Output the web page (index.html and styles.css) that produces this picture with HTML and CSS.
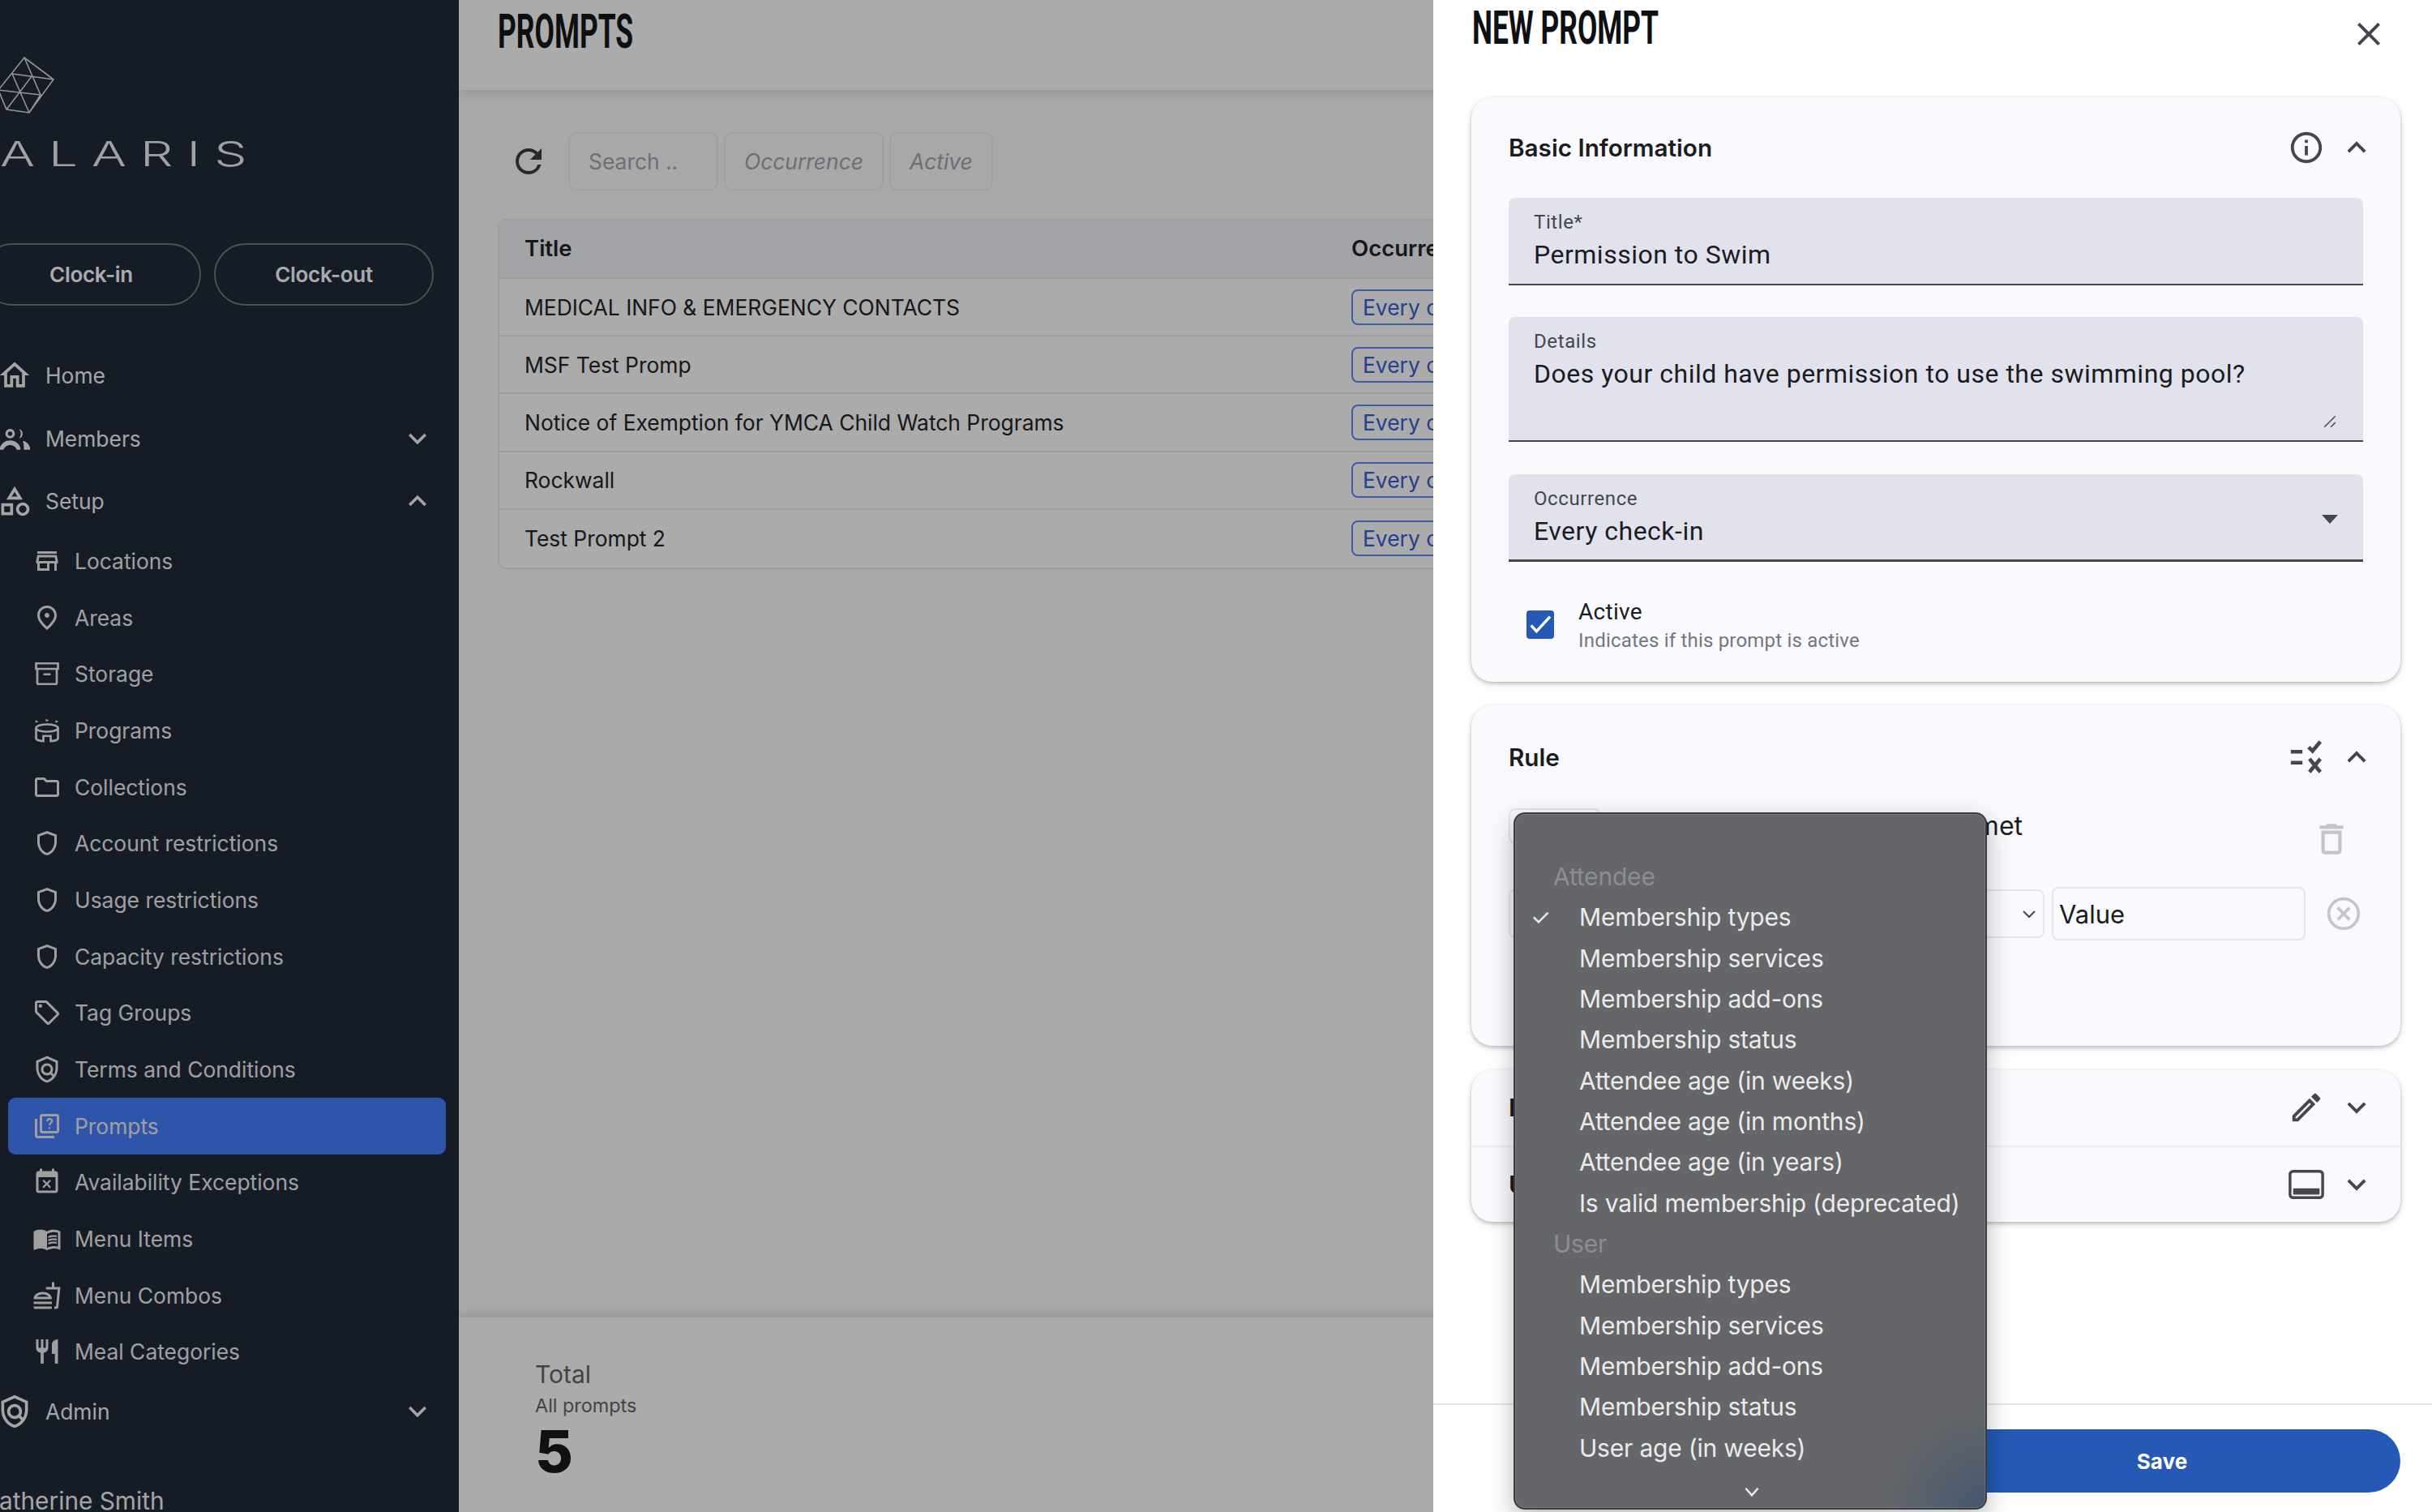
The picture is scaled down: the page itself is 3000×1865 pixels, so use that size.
FILE: index.html
```html
<!DOCTYPE html>
<html lang="en">
<head>
<meta charset="utf-8">
<title>Prompts</title>
<link rel="stylesheet" href="styles.css">
</head>
<body>
<div class="app">
  <aside class="sidebar">
    <div class="side-inner">
      <div class="logo">
        <svg class="logo-mark" viewBox="0 0 70 68" fill="none" stroke="currentColor" stroke-width="1.6"><path d="M30 0L66 27 36 68 8 64-2 40 30 0ZM15 20l51 7M-2 40l52 6M30 0l20 46-14 22M15 20l21 48M40 22L8 64"/></svg>
        <div class="logo-word"><span>ALARIS</span></div>
      </div>
      <div class="clock">
        <button class="clock-btn">Clock-in</button>
        <button class="clock-btn">Clock-out</button>
      </div>
      <nav>
        <a class="top"><svg class="i44" viewBox="0 0 24 24"><path d="M12 5.690l5 4.500V18h-2v-6H9v6H7v-7.810l5-4.500M12 3L2 12h3v8h6v-6h2v6h6v-8h3L12 3z"/></svg><span class="lbl">Home</span></a>
        <a class="top"><svg class="i44" viewBox="0 0 24 24"><path fill-rule="evenodd" d="M9 5.500a3.200 3.200 0 1 1 0 6.400 3.200 3.200 0 0 1 0-6.400zm0 1.700a1.500 1.500 0 1 0 0 3 1.500 1.500 0 0 0 0-3zM2 19.500c0-3.800 3.500-6.300 7-6.300s7 2.500 7 6.300h-2.500c-.6-2-2.500-3.200-4.500-3.200s-3.900 1.200-4.500 3.200zM15 5.600a3.200 3.200 0 0 1 0 6.200 4.600 4.600 0 0 0 0-6.200zM17.500 13.500c2.700.6 5 2.500 5 6h-4.200c0-2.500-.2-4.300-.8-6z"/></svg><span class="lbl">Members</span><svg class="i44 chev" viewBox="0 0 24 24"><path d="M7.410 8.590L12 13.170l4.590-4.580L18 10l-6 6-6-6 1.410-1.410z"/></svg></a>
        <a class="top"><svg class="i44" viewBox="0 0 24 24"><path d="M12 2l-5.500 9h11L12 2zm0 3.840L13.930 9h-3.870L12 5.840zM17.500 13c-2.490 0-4.500 2.010-4.500 4.500s2.010 4.500 4.500 4.500 4.500-2.010 4.500-4.500-2.010-4.500-4.500-4.500zm0 7c-1.380 0-2.500-1.120-2.500-2.500s1.120-2.500 2.500-2.500 2.500 1.120 2.500 2.500-1.120 2.500-2.500 2.500zM3 21.500h8v-8H3v8zm2-6h4v4H5v-4z"/></svg><span class="lbl">Setup</span><svg class="i44 chev" viewBox="0 0 24 24"><path d="M7.410 15.410L12 10.830l4.590 4.580L18 14l-6-6-6 6z"/></svg></a>
        <a class="sub"><svg class="i36" viewBox="0 0 24 24"><path d="M20 4H4v2h16V4zm1 10v-2l-1-5H4l-1 5v2h1v6h10v-6h4v6h2v-6h1zm-9 4H6v-4h6v4zm-6.960-6l.6-3h12.720l.6 3H5.040z"/></svg>Locations</a>
        <a class="sub"><svg class="i36" viewBox="0 0 24 24"><path d="M12 12c-1.100 0-2-.9-2-2s.9-2 2-2 2 .9 2 2-.9 2-2 2zm6-1.800C18 6.570 15.350 4 12 4s-6 2.570-6 6.200c0 2.340 1.950 5.440 6 9.140 4.050-3.700 6-6.800 6-9.140zM12 2c4.200 0 8 3.220 8 8.200 0 3.320-2.670 7.250-8 11.800-5.330-4.550-8-8.480-8-11.800C4 5.220 7.800 2 12 2z"/></svg>Areas</a>
        <a class="sub"><svg class="i36 line" viewBox="0 0 24 24"><path d="M3 3.500h18v4.500H3zM4 8v11.500c0 .5.4 1 1 1h14c.6 0 1-.5 1-1V8M9 12.500h6"/></svg>Storage</a>
        <a class="sub"><svg class="i36 line" viewBox="0 0 24 24"><ellipse cx="12" cy="10" rx="9" ry="3"/><path d="M3 10v8.500c0 1.300 3 2.200 6 2.200V16.500h6v4.200c3 0 6-.9 6-2.200V10"/><path class="flag" d="M2.500 3.500l2.500 1.200-2.500 1.200zM11 2.500l2.500 1.200L11 4.900zM19 3.500l2.500 1.200L19 5.900z"/></svg>Programs</a>
        <a class="sub"><svg class="i36" viewBox="0 0 24 24"><path d="M9.170 6l2 2H20v10H4V6h5.170M10 4H4c-1.100 0-1.990.9-1.990 2L2 18c0 1.100.9 2 2 2h16c1.100 0 2-.9 2-2V8c0-1.100-.9-2-2-2h-8l-2-2z"/></svg>Collections</a>
        <a class="sub"><svg class="i36" viewBox="0 0 24 24"><path d="M12 2L4 5v6.090c0 5.050 3.410 9.760 8 10.910 4.590-1.150 8-5.860 8-10.910V5l-8-3zm6 9.090c0 4-2.550 7.700-6 8.830-3.450-1.130-6-4.820-6-8.830v-4.700l6-2.250 6 2.250v4.700z"/></svg>Account restrictions</a>
        <a class="sub"><svg class="i36" viewBox="0 0 24 24"><path d="M12 2L4 5v6.090c0 5.050 3.410 9.760 8 10.910 4.590-1.150 8-5.860 8-10.910V5l-8-3zm6 9.090c0 4-2.550 7.700-6 8.830-3.450-1.130-6-4.820-6-8.830v-4.700l6-2.250 6 2.250v4.700z"/></svg>Usage restrictions</a>
        <a class="sub"><svg class="i36" viewBox="0 0 24 24"><path d="M12 2L4 5v6.090c0 5.050 3.410 9.760 8 10.910 4.590-1.150 8-5.860 8-10.910V5l-8-3zm6 9.090c0 4-2.550 7.700-6 8.830-3.450-1.130-6-4.820-6-8.830v-4.700l6-2.250 6 2.250v4.700z"/></svg>Capacity restrictions</a>
        <a class="sub"><svg class="i36" viewBox="0 0 24 24"><path d="M21.410 11.580l-9-9C12.050 2.220 11.550 2 11 2H4c-1.100 0-2 .9-2 2v7c0 .55.22 1.050.59 1.420l9 9c.36.36.86.58 1.410.58s1.050-.22 1.410-.59l7-7c.37-.36.59-.86.59-1.410s-.23-1.060-.59-1.420zM13 20.010L4 11V4h7v-.01l9 9-7 7.020z"/><circle cx="6.500" cy="6.500" r="1.500"/></svg>Tag Groups</a>
        <a class="sub"><svg class="i36" viewBox="0 0 24 24"><path d="M12 1L3 5v6c0 5.550 3.840 10.740 9 12 5.160-1.260 9-6.450 9-12V5l-9-4zm7 10c0 1.850-.51 3.650-1.380 5.210l-1.450-1.450c1.290-1.940 1.070-4.580-.64-6.290-1.950-1.950-5.120-1.950-7.070 0-1.950 1.950-1.950 5.120 0 7.070 1.710 1.710 4.350 1.920 6.290.64l1.720 1.720c-1.190 1.420-2.730 2.510-4.470 3.040C7.980 19.690 5 15.520 5 11V6.300l7-3.110 7 3.110V11zm-7 4c-1.660 0-3-1.340-3-3s1.340-3 3-3 3 1.340 3 3-1.340 3-3 3z"/></svg>Terms and Conditions</a>
        <a class="sub active"><svg class="i36" viewBox="0 0 24 24"><path d="M4 6H2v14c0 1.100.9 2 2 2h14v-2H4V6z"/><path d="M20 2H8c-1.100 0-2 .9-2 2v12c0 1.100.9 2 2 2h12c1.100 0 2-.9 2-2V4c0-1.100-.9-2-2-2zm0 14H8V4h12v12z"/><path class="q" d="M12 8c.2-1.200 1-1.900 2.100-1.900 1.200 0 2 .8 2 1.800 0 1.700-2.100 1.700-2.100 3.600M14 13v1.300"/></svg>Prompts</a>
        <a class="sub"><svg class="i36" viewBox="0 0 24 24"><path d="M9.310 17l2.440-2.440L14.190 17l1.060-1.060-2.440-2.440 2.440-2.440L14.190 10l-2.440 2.440L9.310 10l-1.060 1.060 2.440 2.440-2.440 2.440L9.310 17zM19 3h-1V1h-2v2H8V1H6v2H5c-1.110 0-1.990.9-1.990 2L3 19c0 1.100.89 2 2 2h14c1.100 0 2-.9 2-2V5c0-1.100-.9-2-2-2zm0 16H5V8h14v11z"/></svg>Availability Exceptions</a>
        <a class="sub"><svg class="i36" viewBox="0 0 24 24"><path d="M21 5c-1.110-.35-2.330-.5-3.500-.5-1.950 0-4.050.4-5.500 1.500-1.450-1.100-3.550-1.500-5.500-1.500S2.450 4.900 1 6v14.650c0 .25.25.5.5.5.1 0 .15-.05.25-.05C3.100 20.450 5.050 20 6.500 20c1.950 0 4.050.4 5.500 1.500 1.350-.85 3.800-1.500 5.500-1.500 1.650 0 3.350.3 4.750 1.050.1.05.15.05.25.05.25 0 .5-.25.5-.5V6c-.6-.45-1.250-.75-2-1zm0 13.500c-1.100-.35-2.300-.5-3.500-.5-1.700 0-4.150.65-5.500 1.500V8c1.350-.85 3.800-1.500 5.500-1.500 1.200 0 2.400.15 3.500.5v11.500z"/><path d="M17.500 10.500c.88 0 1.730.09 2.500.26V9.240c-.79-.15-1.640-.24-2.500-.24-1.700 0-3.240.29-4.500.83v1.660c1.130-.64 2.700-.99 4.500-.99zM13 12.490v1.660c1.130-.64 2.700-.99 4.500-.99.880 0 1.730.09 2.500.26V11.900c-.79-.15-1.640-.24-2.500-.24-1.700 0-3.240.3-4.500.83zM17.500 14.330c-1.700 0-3.240.29-4.500.83v1.660c1.130-.64 2.700-.99 4.500-.99.880 0 1.730.09 2.500.26v-1.520c-.79-.16-1.640-.24-2.500-.24z"/></svg>Menu Items</a>
        <a class="sub"><svg class="i36" viewBox="0 0 24 24"><path d="M1 21.980c0 .56.45 1.010 1.010 1.010H15c.56 0 1.010-.45 1.010-1.010V21H1v.98zM8.500 8.990C4.750 8.990 1 11 1 15h15c0-4-3.750-6.010-7.500-6.010zM3.620 13c1.110-1.550 3.470-2.010 4.880-2.010s3.770.46 4.880 2.010H3.620zM1 17h15v2H1zM18 5V1h-2v4h-5l.23 2h9.560l-1.400 14H18v2h1.720c.84 0 1.530-.65 1.630-1.470L23 5h-5z"/></svg>Menu Combos</a>
        <a class="sub"><svg class="i36" viewBox="0 0 24 24"><path d="M11 9H9V2H7v7H5V2H3v7c0 2.120 1.660 3.840 3.750 3.970V22h2.500v-9.030C11.340 12.840 13 11.120 13 9V2h-2v7zm5-3v8h2.500v8H21V2c-2.760 0-5 2.240-5 4z"/></svg>Meal Categories</a>
        <a class="top"><svg class="i44" viewBox="0 0 24 24"><path d="M12 1L3 5v6c0 5.550 3.840 10.740 9 12 5.160-1.260 9-6.450 9-12V5l-9-4zm7 10c0 1.850-.51 3.650-1.380 5.210l-1.450-1.450c1.290-1.940 1.070-4.580-.64-6.290-1.950-1.950-5.120-1.950-7.070 0-1.950 1.950-1.950 5.120 0 7.070 1.710 1.710 4.350 1.920 6.290.64l1.720 1.720c-1.190 1.420-2.730 2.510-4.470 3.040C7.980 19.690 5 15.520 5 11V6.300l7-3.110 7 3.110V11zm-7 4c-1.660 0-3-1.340-3-3s1.340-3 3-3 3 1.340 3 3-1.340 3-3 3z"/></svg><span class="lbl">Admin</span><svg class="i44 chev" viewBox="0 0 24 24"><path d="M7.410 8.590L12 13.170l4.590-4.580L18 10l-6 6-6-6 1.410-1.410z"/></svg></a>
      </nav>
      <div class="user">Katherine Smith</div>
    </div>
  </aside>

  <main class="main">
    <header class="page-head"><h1 class="cond page-title">PROMPTS</h1></header>
    <div class="toolbar">
      <svg class="refresh" viewBox="0 0 24 24"><path d="M17.650 6.350A7.958 7.958 0 0 0 12 4c-4.420 0-7.990 3.580-7.990 8s3.570 8 7.990 8c3.730 0 6.840-2.550 7.730-6h-2.080A5.990 5.990 0 0 1 12 18c-3.310 0-6-2.690-6-6s2.690-6 6-6c1.660 0 3.140.69 4.220 1.780L13 11h7V4l-2.350 2.350z"/></svg>
      <div class="tb-box tb-search">Search ..</div>
      <div class="tb-box tb-em">Occurrence</div>
      <div class="tb-box tb-em">Active</div>
    </div>
    <div class="table-wrap">
      <div class="t-row t-head"><div class="t-title">Title</div><div>Occurrence</div></div>
      <div class="t-row"><div class="t-title">MEDICAL INFO &amp; EMERGENCY CONTACTS</div><div class="chip">Every check-in</div></div>
      <div class="t-row"><div class="t-title">MSF Test Promp</div><div class="chip">Every check-in</div></div>
      <div class="t-row"><div class="t-title">Notice of Exemption for YMCA Child Watch Programs</div><div class="chip">Every check-in</div></div>
      <div class="t-row"><div class="t-title">Rockwall</div><div class="chip">Every check-in</div></div>
      <div class="t-row"><div class="t-title">Test Prompt 2</div><div class="chip">Every check-in</div></div>
    </div>
    <footer class="stats">
      <div class="st-total">Total</div>
      <div class="st-sub">All prompts</div>
      <div class="st-num">5</div>
    </footer>
  </main>
</div>

<div class="scrim"></div>

<section class="drawer">
  <div class="dr-head">
    <h2 class="cond dr-title">NEW PROMPT</h2>
    <svg class="dr-close" viewBox="0 0 24 24"><path d="M19 6.410L17.590 5 12 10.590 6.410 5 5 6.410 10.590 12 5 17.590 6.410 19 12 13.410 17.590 19 19 17.590 13.410 12z"/></svg>
  </div>

  <div class="card card-basic">
    <div class="card-head">
      <span class="card-title">Basic Information</span>
      <svg class="c-ic" viewBox="0 0 24 24"><path d="M11 7h2v2h-2zm0 4h2v6h-2zm1-9C6.480 2 2 6.480 2 12s4.480 10 10 10 10-4.480 10-10S17.520 2 12 2zm0 18c-4.410 0-8-3.590-8-8s3.590-8 8-8 8 3.590 8 8-3.590 8-8 8z"/></svg>
      <svg class="c-ic c-chev" viewBox="0 0 24 24"><path d="M7.410 15.410L12 10.830l4.590 4.580L18 14l-6-6-6 6z"/></svg>
    </div>
    <div class="field f-title"><div class="f-label">Title*</div><div class="f-value">Permission to Swim</div></div>
    <div class="field f-details"><div class="f-label">Details</div><div class="f-value">Does your child have permission to use the swimming pool?</div>
      <svg class="resizer" viewBox="0 0 16 16"><path d="M14 2L2 14M14 9l-5 5"/></svg></div>
    <div class="field f-occ"><div class="f-label">Occurrence</div><div class="f-value">Every check-in</div><span class="f-arrow"></span></div>
    <div class="check-row">
      <span class="checkbox"><svg viewBox="0 0 24 24"><path d="M3.500 13l5 5.500L21 5"/></svg></span>
      <div><div class="ck-main">Active</div><div class="ck-sub">Indicates if this prompt is active</div></div>
    </div>
  </div>

  <div class="card card-rule">
    <div class="card-head head-rule">
      <span class="card-title">Rule</span>
      <svg class="c-ic rule-ic" viewBox="0 0 24 24"><path d="M2 8.500H9.500M2 15.500H9.500M13.500 5.500l2.500 2.500 5-6M14 13l7 8.500M21 13l-7 8.500"/></svg>
      <svg class="c-ic c-chev" viewBox="0 0 24 24"><path d="M7.410 15.410L12 10.830l4.590 4.580L18 14l-6-6-6 6z"/></svg>
    </div>
    <div class="rule-row1">
      <div class="mini-field"></div>
      <div class="rule-text">met</div>
      <svg class="trash" viewBox="0 0 24 24"><path d="M16 9v10H8V9h8m-1.500-6h-5l-1 1H5v2h14V4h-3.500l-1-1zM18 7H6v12c0 1.100.9 2 2 2h8c1.100 0 2-.9 2-2V7z"/></svg>
    </div>
    <div class="rule-row2">
      <div class="rule-select"><svg viewBox="0 0 24 24"><path d="M5 9l7 7 7-7"/></svg></div>
      <div class="rule-value">Value</div>
      <svg class="x-circle" viewBox="0 0 24 24"><circle cx="12" cy="12" r="10"/><path d="M8 8l8 8M16 8l-8 8"/></svg>
    </div>
  </div>

  <div class="card card-more">
    <div class="more-row">
      <span class="card-title">E</span>
      <svg class="c-ic" viewBox="0 0 24 24"><path d="M3 17.250V21h3.750L17.810 9.940l-3.750-3.750L3 17.250zM5.920 19H5v-.92l9.060-9.060.92.92L5.920 19zM20.710 5.630l-2.340-2.340c-.2-.2-.45-.29-.71-.29s-.51.1-.7.29l-1.830 1.830 3.750 3.750 1.830-1.830c.39-.39.39-1.020 0-1.410z"/></svg>
      <svg class="c-ic c-chev" viewBox="0 0 24 24"><path d="M7.410 8.590L12 13.170l4.590-4.580L18 10l-6 6-6-6 1.410-1.410z"/></svg>
    </div>
    <div class="more-row">
      <span class="card-title">U</span>
      <svg class="c-ic panel-ic" viewBox="0 0 24 24"><rect class="pr" x="1.500" y="3.500" width="21" height="17" rx="2"/><rect x="3.500" y="14.500" width="17" height="4"/></svg>
      <svg class="c-ic c-chev" viewBox="0 0 24 24"><path d="M7.410 8.590L12 13.170l4.590-4.580L18 10l-6 6-6-6 1.410-1.410z"/></svg>
    </div>
  </div>

  <div class="dr-foot"><button class="save">Save</button></div>
</section>

<div class="popup">
  <div class="pop-group">Attendee</div>
  <div class="pop-item checked">Membership types</div>
  <div class="pop-item">Membership services</div>
  <div class="pop-item">Membership add-ons</div>
  <div class="pop-item">Membership status</div>
  <div class="pop-item">Attendee age (in weeks)</div>
  <div class="pop-item">Attendee age (in months)</div>
  <div class="pop-item">Attendee age (in years)</div>
  <div class="pop-item">Is valid membership (deprecated)</div>
  <div class="pop-group">User</div>
  <div class="pop-item">Membership types</div>
  <div class="pop-item">Membership services</div>
  <div class="pop-item">Membership add-ons</div>
  <div class="pop-item">Membership status</div>
  <div class="pop-item">User age (in weeks)</div>
  <svg class="pop-more" viewBox="0 0 24 24"><path d="M5 8l7 8 7-8"/></svg>
</div>
</body>
</html>
```

FILE: styles.css
```css
* { box-sizing: border-box; }
html, body { margin: 0; height: 100%; overflow: hidden; }
body { font-family: Inter, "Liberation Sans", sans-serif; color: #22252a; background: #fff; position: relative; width: 3000px; height: 1865px; }
svg { fill: currentColor; flex: none; display: block; }

.app { display: flex; height: 1865px; }
.sidebar { width: 566px; flex: none; background: #202a3a; color: #f6f6f6; overflow: hidden; }
.side-inner { margin-left: -23px; width: 589px; }

.logo { height: 300px; padding: 71px 0 0 23px; }
.logo-mark { width: 70px; height: 68px; overflow: visible; stroke: #dcdcdc; fill: none; }
.logo-word { margin-top: 35px; height: 32px; line-height: 32px; font-weight: 300; font-size: 42px; letter-spacing: 11.2px; color: #f0f0f0; }
.logo-word span { display: inline-block; transform: scaleX(1.52); transform-origin: 0 50%; }

.clock { display: flex; gap: 16px; height: 77px; margin-bottom: 47.5px; }
.clock-btn { width: 271px; height: 77px; border-radius: 39px; border: 2px solid #72767d; background: transparent; color: #fff; font: 600 26px Inter, sans-serif; letter-spacing: -.3px; padding: 0; }

.top { display: flex; align-items: center; height: 77.500px; padding: 0 29px 0 19px; font-size: 26.400px; }
.top .lbl { margin-left: 16px; flex: 1; }
.i44 { width: 44px; height: 44px; }
.sub { display: flex; align-items: center; gap: 16px; height: 69.700px; margin-left: 33px; width: 540px; padding-left: 30px; font-size: 26.400px; color: #eeeeee; border-radius: 9px; }
.i36 { width: 36px; height: 36px; }
.i36.line { fill: none; stroke: currentColor; stroke-width: 1.800; }
.i36.line .flag { fill: currentColor; stroke: none; }
.q { fill: none; stroke: currentColor; stroke-width: 1.400; }
.sub.active { background: #467fff; }
.user { margin-top: 36px; padding-left: 2px; font-size: 29.800px; line-height: 70px; white-space: nowrap; }

.main { flex: 1; min-width: 0; background: #fbfbfb; display: flex; flex-direction: column; overflow: hidden; }
.page-head { height: 111px; flex: none; background: #fff; box-shadow: 0 3px 14px rgba(0,0,0,.14); padding-left: 48px; position: relative; }
.cond { margin: 0; font-family: Roboto, sans-serif; font-weight: 700; color: #111; display: inline-block; transform-origin: 0 50%; white-space: nowrap; }
.page-title { font-size: 59px; line-height: 78px; transform: scaleX(.6); color: #15171a; }

.toolbar { display: flex; align-items: center; padding: 51px 0 0 62px; flex: none; gap: 7px; height: 124px; }
.refresh { width: 48px; height: 48px; margin-right: 18px; fill: #3a3c40; }
.tb-box { height: 72px; border: 2px solid #eeeeee; border-radius: 10px; display: flex; align-items: center; padding: 0 23px; font-size: 26.400px; color: #a2a6ae; }
.tb-search { width: 185px; }
.tb-em { font-style: italic; }

.table-wrap { margin: 35px 0 0 48px; width: 1400px; border: 2px solid #ebebeb; border-right: 0; border-radius: 10px 0 0 10px; background: #fff; flex: none; }
.t-row { display: flex; align-items: center; height: 71.200px; border-bottom: 2px solid #ebebeb; font-size: 26.400px; color: #22252a; white-space: nowrap; }
.t-row:last-child { border-bottom: 0; }
.t-head { height: 72px; background: #f2f5f9; font-weight: 600; font-size: 27.500px; padding-bottom: 2px; }
.t-title { width: 1051px; padding-left: 31px; flex: none; }
.chip { height: 44px; border: 2px solid #578cfa; border-radius: 8px; display: flex; align-items: center; padding: 0 12px; color: #3760d6; }

.stats { margin-top: auto; height: 240px; flex: none; background: #fff; box-shadow: 0 -2px 12px rgba(0,0,0,.14); padding: 48px 0 0 94px; position: relative; }
.st-total { font-size: 30px; line-height: 44px; color: #666; }
.st-sub { font-size: 23.400px; line-height: 34px; color: #666; }
.st-num { font-size: 72px; font-weight: 800; line-height: 78px; color: #191a1d; }

.scrim { position: absolute; inset: 0; background: rgba(0,0,0,.33); }

.drawer { position: absolute; top: 0; right: 0; bottom: 0; width: 1232px; background: #fff; display: flex; flex-direction: column; font-family: Roboto, sans-serif; }
.dr-head { height: 120px; flex: none; padding: 0 54px 0 48px; display: flex; justify-content: space-between; }
.dr-title { font-size: 57px; line-height: 70px; transform: scaleX(.62); color: #0e0f12; }
.dr-close { width: 48px; height: 48px; margin-top: 18px; fill: #44474e; }

.card { margin: 0 39px 0 47px; flex: none; background: #f9f9fe; border-radius: 26px; box-shadow: 0 2px 5px rgba(0,0,0,.25), 0 4px 12px rgba(0,0,0,.06); padding: 0 46px; }
.card-basic { height: 721px; }
.card-rule { height: 420px; margin-top: 29px; }
.card-more { height: 187px; margin-top: 30px; padding: 0; display: flex; flex-direction: column; }

.card-head { height: 124px; display: flex; align-items: center; margin-right: -23px; }
.head-rule { height: 127px; }
.card-title { font-family: Inter, sans-serif; font-weight: 600; font-size: 29.700px; color: #191c20; flex: 1; }
.c-ic { width: 46px; height: 46px; fill: #44474e; }
.c-chev { margin-left: 16px; margin-right: 8px; }
.rule-ic { fill: none; stroke: #44474e; stroke-width: 2.400; }

.field { position: relative; background: #e1e2ec; border-radius: 8px 8px 0 0; border-bottom: 2px solid #44474e; padding: 14px 31px 0; }
.f-title { height: 108px; }
.f-details { height: 154px; margin-top: 39px; }
.f-occ { height: 108px; margin-top: 40px; border-bottom-width: 3px; }
.f-label { font-size: 24px; line-height: 32px; color: #44474e; letter-spacing: .6px; }
.f-value { font-size: 32px; line-height: 44px; margin-top: 2px; color: #191c20; letter-spacing: .5px; }
.resizer { position: absolute; right: 32px; bottom: 14px; width: 18px; height: 18px; fill: none; stroke: #555; stroke-width: 1.500; }
.f-arrow { position: absolute; right: 31px; top: 50px; border: 10px solid transparent; border-top: 11px solid #44474e; border-bottom: 0; }

.check-row { display: flex; align-items: center; margin-top: 44px; padding-left: 22px; gap: 30px; }
.checkbox { width: 34px; height: 35px; margin-bottom: 4px; background: #2559b5; border-radius: 4px; display: flex; align-items: center; justify-content: center; }
.checkbox svg { width: 32px; height: 32px; fill: none; stroke: #fff; stroke-width: 2.500; }
.ck-main { font-size: 28px; line-height: 36px; color: #191c20; letter-spacing: .3px; }
.ck-sub { font-size: 24px; line-height: 34px; color: #74777f; letter-spacing: .2px; }

.rule-row1 { display: flex; height: 97px; align-items: flex-start; font-family: Inter, sans-serif; }
.mini-field { width: 114px; height: 44px; border: 2px solid #e6e6ea; border-radius: 8px; flex: none; }
.rule-text { flex: 1; text-align: right; padding-right: 356px; font-size: 32px; line-height: 44px; color: #191c20; }
.trash { width: 50px; height: 50px; margin: 13px 14px 0 0; fill: #c3c4ca; }
.rule-row2 { display: flex; align-items: center; height: 66px; font-family: Inter, sans-serif; }
.rule-select { flex: 1; height: 60px; border: 2px solid #e6e6ea; border-radius: 8px; margin-right: 9px; display: flex; align-items: center; justify-content: flex-end; padding-right: 5px; }
.rule-select svg { width: 24px; height: 24px; fill: none; stroke: #44474e; stroke-width: 2; }
.rule-value { width: 313px; height: 66px; border: 2px solid #e6e6ea; border-radius: 8px; display: flex; align-items: center; padding-left: 7px; font-size: 31px; color: #191c20; flex: none; }
.x-circle { width: 44px; height: 44px; margin: 0 2px 0 25px; fill: none; stroke: #c4c5cd; stroke-width: 2; }

.more-row { flex: 1; display: flex; align-items: center; padding: 0 23px 0 46px; }
.more-row + .more-row { border-top: 2px solid #efeff3; }
.panel-ic .pr { fill: none; stroke: #44474e; stroke-width: 1.800; }

.dr-foot { margin-top: auto; height: 134px; flex: none; border-top: 2px solid #e6e6ea; display: flex; justify-content: flex-end; padding: 30px 39px 0 0; }
.save { width: 588px; height: 78px; background: #2559b5; border: 0; border-radius: 39px; color: #fff; font: 700 26px Inter, sans-serif; }

.popup { position: absolute; left: 1867px; top: 1002px; width: 584px; height: 860px; border-radius: 14px; border: 2px solid #3c3d40; box-shadow: 0 10px 30px rgba(0,0,0,.28), inset 0 0 0 1px rgba(255,255,255,.12); background: radial-gradient(circle at 100% 100%, #44556f 0, rgba(72,88,110,.7) 40px, rgba(100,102,105,0) 125px), #646669; padding-top: 52px; overflow: hidden; color: #ebebeb; font-size: 30px; }
.pop-group, .pop-item { height: 50.330px; line-height: 50.330px; white-space: nowrap; letter-spacing: -.2px; }
.pop-group { padding-left: 47px; color: #8c8e91; }
.pop-item { padding-left: 79px; position: relative; }
.checked::before { content: "✓"; position: absolute; left: 19px; font-size: 28px; }
.pop-more { width: 26px; height: 26px; margin: 16px 0 0 279px; fill: none; stroke: #eee; stroke-width: 2.200; }
```
